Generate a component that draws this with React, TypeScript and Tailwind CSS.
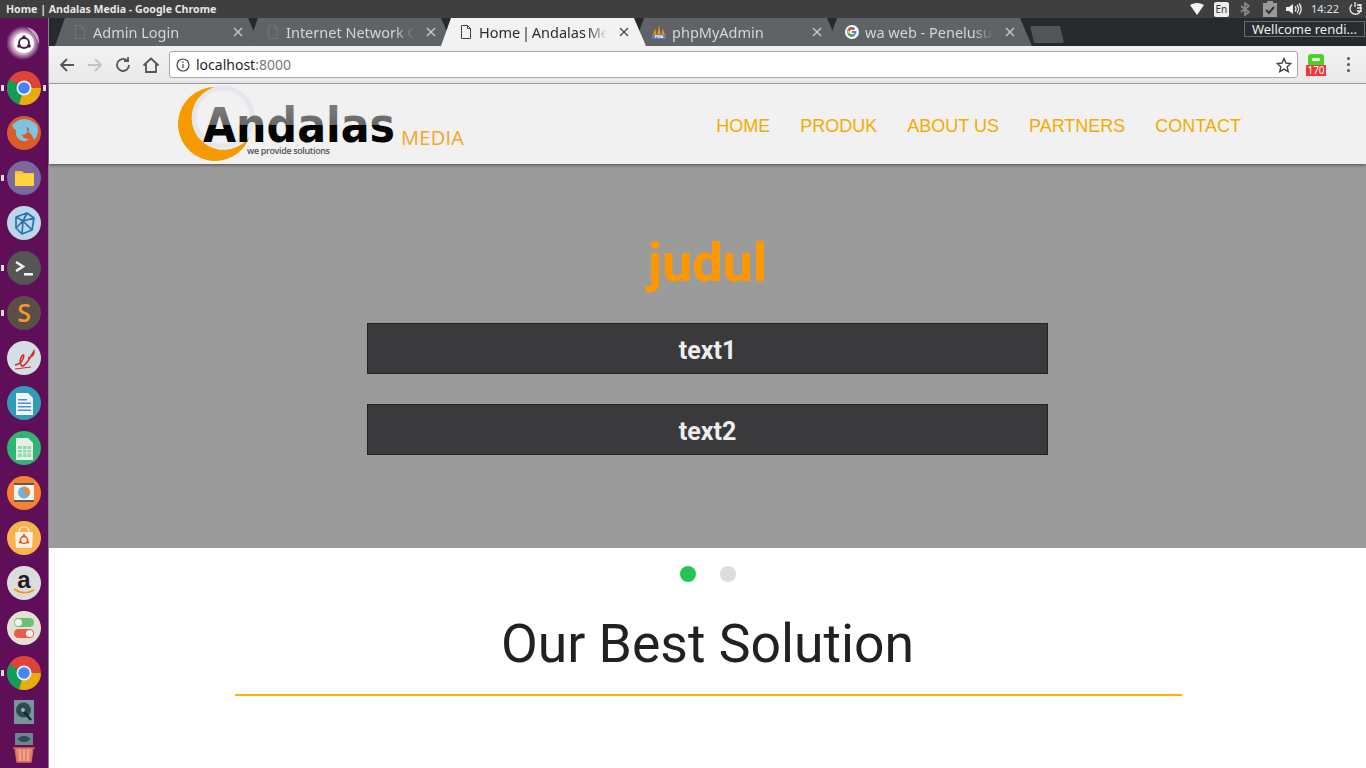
import { ReactNode } from "react";

const Chrome = ({ size = 34 }: { size?: number }) => (
  <svg width={size} height={size} viewBox="0 0 34 34">
    <circle cx="17" cy="17" r="17" fill="#db4437" />
    <path d="M17 17 L2.3 8.5 A17 17 0 0 0 12 33.2 Z" fill="#0f9d58" />
    <path d="M17 17 L34 17 A17 17 0 0 1 12 33.2 Z" fill="#e7ad0c" />
    <circle cx="17" cy="17" r="7.5" fill="#f1f1f1" />
    <circle cx="17" cy="17" r="5.8" fill="#4285f4" />
  </svg>
);

const Badge = ({ bg, children }: { bg: string; children: ReactNode }) => (
  <svg width="34" height="34" viewBox="0 0 34 34">
    <circle cx="17" cy="17" r="17" fill={bg} />
    {children}
  </svg>
);

const Doc = ({ fill = "#f2f5f7" }: { fill?: string }) => (
  <path d="M9 7h12l5 5v17H9z" fill={fill} />
);

const dockItems: { icon: ReactNode; pip?: boolean; both?: boolean; h?: string }[] = [
  {
    icon: (
      <svg width="34" height="34" viewBox="0 0 34 34">
        <defs>
          <radialGradient id="swirl">
            <stop offset="0.55" stopColor="#e8d4e6" />
            <stop offset="1" stopColor="#5e0f57" />
          </radialGradient>
        </defs>
        <circle cx="16" cy="17" r="17" fill="url(#swirl)" />
        <path d="M20 1 Q33 5 32 18 Q29 9 20 1z" fill="#c9a8c6" />
        <circle cx="17" cy="17" r="10" fill="#fff" />
        <circle cx="17" cy="17" r="5" fill="none" stroke="#4a1a4a" strokeWidth="1.8" />
        <circle cx="17" cy="11.2" r="1.8" fill="#4a1a4a" />
        <circle cx="12" cy="20" r="1.8" fill="#4a1a4a" />
        <circle cx="22" cy="20" r="1.8" fill="#4a1a4a" />
      </svg>
    ),
    h: "h-[44px]",
  },
  { icon: <Chrome />, pip: true, both: true },
  {
    icon: (
      <Badge bg="#dc5a2a">
        <path d="M5 9 Q17 -3 30 9 Q33 17 27 24 Q24 16 21 16 Q24 12 19 11 Q23 18 15 19 Q16 23 22 23 Q18 27 13 24 Q8 21 9 14 Q6 13 5 9z" fill="#7cc5df" />
      </Badge>
    ),
  },
  {
    icon: (
      <Badge bg="#7a689f">
        <path d="M8 10h7l2 2h10v13H8z" fill="#fbc02d" />
        <path d="M8 13h19v12H8z" fill="#fdd33f" />
      </Badge>
    ),
    pip: true,
  },
  {
    icon: (
      <Badge bg="#bcd6ea">
        <path d="M9 11 L20 7 L27 12 L25 24 L15 28 L9 22 Z M9 11 L16 15 L27 12 M16 15 L15 28 M20 7 L16 15 M9 22 L16 15 L25 24" fill="none" stroke="#2a72ad" strokeWidth="1.7" strokeLinejoin="round" />
      </Badge>
    ),
  },
  {
    icon: (
      <Badge bg="#555555">
        <path d="M9 11 L16 15.500 L9 20" fill="none" stroke="#f2f2f2" strokeWidth="2.6" />
        <path d="M17 22h9v2.600h-9z" fill="#f2f2f2" />
      </Badge>
    ),
    pip: true,
  },
  {
    icon: (
      <Badge bg="#5a4e48">
        <text x="17" y="25.500" textAnchor="middle" fontSize="25" fontWeight="600" fill="#f7982a" className="font-['Open_Sans',sans-serif]">S</text>
      </Badge>
    ),
    pip: true,
  },
  {
    icon: (
      <Badge bg="#d4dfe5">
        <path d="M8 24 Q14 23 16 18 Q18 12 15 15 Q12 19 14 24 Q16 27 21 20 L27 10 Q28 15 21 17" fill="none" stroke="#d9272c" strokeWidth="1.5" />
        <path d="M8 28 L24 26" stroke="#d9272c" strokeWidth="1" />
      </Badge>
    ),
  },
  {
    icon: (
      <Badge bg="#2f9db5">
        <Doc />
        <path d="M11 13h9v1.400h-9zM11 16.500h13v1.400H11zM11 20h13v1.400H11zM11 23.500h13v1.400H11z" fill="#4c8fe0" />
      </Badge>
    ),
  },
  {
    icon: (
      <Badge bg="#2fb573">
        <Doc fill="#e8efe9" />
        <path d="M11 15h13v11H11z" fill="#8fdcae" />
        <path d="M11 18.500h13M11 22h13M15.500 15v11M20 15v11" stroke="#e8efe9" strokeWidth="1" />
      </Badge>
    ),
  },
  {
    icon: (
      <Badge bg="#f58233">
        <path d="M7 8h20v17H7z" fill="#f4f2ec" />
        <path d="M7 7h20v2H7zM7 24h20v2H7z" fill="#5a5a5a" />
        <circle cx="17" cy="16.500" r="6" fill="#6fb3cf" />
        <path d="M17 16.500V10.500A6 6 0 0 1 22 19.500z" fill="#f08a3a" />
      </Badge>
    ),
  },
  {
    icon: (
      <Badge bg="#f9b34c">
        <path d="M8 11h18l-1 16H9z" fill="#f7f0e6" />
        <path d="M12 11 Q12 6 17 6 Q22 6 22 11" fill="none" stroke="#f7f0e6" strokeWidth="1.2" />
        <circle cx="17" cy="19" r="3.600" fill="none" stroke="#e95420" strokeWidth="1.5" />
        <circle cx="17" cy="14.600" r="1.300" fill="#e95420" />
        <circle cx="13.200" cy="21.200" r="1.300" fill="#e95420" />
        <circle cx="20.800" cy="21.200" r="1.300" fill="#e95420" />
      </Badge>
    ),
  },
  {
    icon: (
      <Badge bg="#dcdcdc">
        <text x="17" y="22" textAnchor="middle" fontSize="24" fontWeight="700" fill="#1d1d1b" className="font-['Liberation_Sans',sans-serif]">a</text>
        <path d="M7 23 Q17 30 27 24" fill="none" stroke="#f09a1a" strokeWidth="1.6" />
      </Badge>
    ),
  },
  {
    icon: (
      <Badge bg="#e3e1d5">
        <rect x="7" y="7" width="20" height="9" rx="4.500" fill="#6cc070" />
        <circle cx="11.500" cy="11.500" r="3.600" fill="#f4f4ee" />
        <rect x="7" y="18" width="20" height="9" rx="4.500" fill="#e85c50" />
        <circle cx="22.500" cy="22.500" r="3.600" fill="#f4f4ee" />
      </Badge>
    ),
  },
  { icon: <Chrome />, pip: true },
  {
    icon: (
      <svg width="34" height="34" viewBox="0 0 34 34">
        <rect x="7" y="3" width="20" height="24" rx="1" fill="#7b949c" />
        <path d="M9 13a7.500 7.500 0 0 1 15 0 7.500 7.500 0 0 1-15 0z" fill="#2e4a54" />
        <circle cx="16" cy="13" r="2" fill="#9fb3ba" />
        <path d="M17 15 L24 23" stroke="#16262c" strokeWidth="2.500" />
      </svg>
    ),
    h: "h-[37px]",
  },
  {
    icon: (
      <svg width="34" height="34" viewBox="0 0 34 34">
        <rect x="8" y="1" width="18" height="12" fill="#6d858d" />
        <ellipse cx="17" cy="7" rx="6" ry="3" fill="#2e4a54" />
        <path d="M6 16h22M8 16l2 14h14l2-14" fill="#e8836e" stroke="#d96a55" strokeWidth="1.4" />
        <path d="M13 17v12M17 17v12M21 17v12" stroke="#f4b9ab" strokeWidth="1.2" />
      </svg>
    ),
    h: "h-[34px]",
  },
];

const PageIcon = ({ tone = "#6f7377" }: { tone?: string }) => (
  <svg width="12" height="14" viewBox="0 0 12 14" fill="none" stroke={tone} strokeWidth="1">
    <path d="M1.500.5h6l3 3v10h-9z" />
    <path d="M7.500.5v3h3" />
  </svg>
);

const PmaIcon = () => (
  <svg width="16" height="18" viewBox="0 0 16 18">
    <path d="M1 12 L4 5 L5 12zM6 12 L8 1 L10 12zM11 12 L12 5 L15 12z" fill="#f29400" />
    <rect x="0" y="12" width="16" height="5" fill="#6c78af" />
    <text x="8" y="16.300" textAnchor="middle" fontSize="4.500" fontWeight="700" fill="#fff" className="font-['Liberation_Sans',sans-serif]">PMA</text>
  </svg>
);

const GoogleIcon = () => (
  <svg width="16" height="16" viewBox="0 0 16 16">
    <circle cx="8" cy="8" r="8" fill="#fff" />
    <path d="M12.900 6.800H8v2.400h2.800a3 3 0 1 1-.8-3.400l1.700-1.700A5.400 5.400 0 1 0 13 8c0-.4 0-.8-.1-1.200z" fill="#4285f4" />
    <path d="M3.200 5.500A5.400 5.400 0 0 1 11.700 4.100L10 5.800A3 3 0 0 0 5.300 6.900z" fill="#ea4335" />
    <path d="M3.200 10.500l2.100-1.400A3 3 0 0 0 5.300 6.900L3.200 5.500a5.400 5.400 0 0 0 0 5z" fill="#fbbc05" />
    <path d="M3.200 10.500A5.400 5.400 0 0 0 11.600 12l-1.900-1.500a3 3 0 0 1-4.400-1.400z" fill="#34a853" />
  </svg>
);

const tabShape = "[clip-path:polygon(10px_0,calc(100%-12px)_0,100%_100%,0_100%)]";

const tabs: { title: string; icon: ReactNode; active?: boolean; gap: string }[] = [
  { title: "Admin Login", icon: <PageIcon />, gap: "gap-[6px]" },
  { title: "Internet Network Connection", icon: <PageIcon />, gap: "gap-[6px]" },
  { title: "Home | Andalas Media", icon: <PageIcon tone="#444" />, active: true, gap: "gap-[6px]" },
  { title: "phpMyAdmin", icon: <PmaIcon />, gap: "gap-[6px]" },
  { title: "wa web - Penelusuran", icon: <GoogleIcon />, gap: "gap-[6px]" },
];

const Tab = ({ title, icon, active, gap }: { title: string; icon: ReactNode; active?: boolean; gap: string }) => (
  <div
    className={`${tabShape} ${gap} ml-[-12px] first:ml-0 flex h-[28px] w-[205px] shrink-0 items-center pl-[18px] pr-[17px] text-[14.5px] ${
      active ? "z-10 bg-[#f2f2f2] text-[#2b2b2b] [word-spacing:-2px]" : "bg-[#5f6367] text-[#d4d6d8]"
    }`}
  >
    <span className="flex w-[14px] shrink-0 justify-center">{icon}</span>
    <span className="min-w-0 flex-1 overflow-hidden whitespace-nowrap pt-[1px] [mask-image:linear-gradient(to_right,black_85%,transparent)]">{title}</span>
    <span className={`ml-[6px] shrink-0 ${active ? "text-[#555]" : "text-[#c4c6c8]"}`}>
      <svg width="10" height="10" viewBox="0 0 10 10" stroke="currentColor" strokeWidth="1.5">
        <path d="M1 1l8 8M9 1l-8 8" />
      </svg>
    </span>
  </div>
);

const TopTray = () => (
  <div className="flex items-center text-[#dfdfdf]">
    <svg width="14" height="12" viewBox="0 0 14 12" className="mr-[10px]"><path d="M0 2Q7-2 14 2L7 12z" fill="#f4f4f4" /></svg>
    <span className="mr-[11px] flex h-[15px] w-[15px] items-center justify-center rounded-[2px] bg-[#eeeeee] text-[10px] text-[#333]">En</span>
    <svg width="10" height="14" viewBox="0 0 10 14" fill="none" stroke="#8b8b8b" strokeWidth="1.6" className="mr-[13px]"><path d="M1 4l8 6-4 3V1l4 3-8 6" /></svg>
    <svg width="14" height="16" viewBox="0 0 14 16" className="mr-[9px]"><path d="M0 2h4V0h6v2h4v14H0z" fill="#9a9a9a" /><path d="M3 9l3 3 5-6" fill="none" stroke="#333" strokeWidth="2" /></svg>
    <svg width="16" height="12" viewBox="0 0 16 12" className="mr-[9px]"><path d="M0 4h3l4-3v10L3 8H0z" fill="#eee" /><path d="M9 3.500a3.500 3.500 0 0 1 0 5M11 2a6 6 0 0 1 0 8M13 .5a8 8 0 0 1 0 11" fill="none" stroke="#eee" strokeWidth="1.3" /></svg>
    <span className="mr-[9px] text-[11px] text-[#dbe3ea]">14:22</span>
    <svg width="14" height="14" viewBox="0 0 14 14" fill="none" stroke="#eee" strokeWidth="1.3" className="mr-[4px]"><path d="M4 2.500a5.500 5.500 0 1 0 7 0" /><path d="M7 0v5M9 3h5M9 6h5M9 9h5" /></svg>
  </div>
);

const ToolbarIcon = ({ d, color = "#555" }: { d: string; color?: string }) => (
  <svg width="18" height="18" viewBox="0 0 18 18" fill="none" stroke={color} strokeWidth="1.8">
    <path d={d} />
  </svg>
);

const Logo = () => (
  <svg width="290" height="80" viewBox="0 0 290 80">
    <defs>
      <linearGradient id="logoText" gradientUnits="userSpaceOnUse" x1="0" y1="18" x2="0" y2="60">
        <stop offset="0" stopColor="#808080" />
        <stop offset="0.54" stopColor="#666666" />
        <stop offset="0.55" stopColor="#050505" />
        <stop offset="1" stopColor="#000" />
      </linearGradient>
    </defs>
    <circle cx="47" cy="33" r="29" fill="#f1f1f1" stroke="#e4e8ec" strokeWidth="5" />
    <path d="M39 3 A37 37 0 1 0 74 52 A32 32 0 1 1 39 3 Z" fill="#f59b00" />
    <text x="27" y="58" fontSize="48" fontWeight="700" textLength="192" lengthAdjust="spacingAndGlyphs" fill="url(#logoText)" className="font-['DejaVu_Sans',sans-serif]">Andalas</text>
    <text x="71" y="70" fontSize="9" fontWeight="600" textLength="83" fill="#555" className="font-['Open_Sans',sans-serif]">we provide solutions</text>
    <text x="225" y="61" fontSize="20" textLength="63" fill="#f5a623" className="font-['Open_Sans',sans-serif]">MEDIA</text>
  </svg>
);

const navLinks = ["HOME", "PRODUK", "ABOUT US", "PARTNERS", "CONTACT"];

export default function App() {
  return (
    <div className="relative flex h-[768px] w-[1366px] flex-col overflow-hidden bg-white font-['Noto_Sans',sans-serif]">
      <div className="flex h-[18px] shrink-0 items-center justify-between bg-[#3f3f3f] pl-[6px]">
        <span className="pt-[1px] text-[10.6px] font-bold text-[#e6e6e6]">Home | Andalas Media - Google Chrome</span>
        <TopTray />
      </div>

      <div className="flex min-h-0 flex-1">
        <div className="flex w-[49px] shrink-0 flex-col items-center border-r border-[#8d7a8b] bg-[#5e0f57] pt-[3px]">
          {dockItems.map((item, i) => (
            <div key={i} className={`relative flex ${item.h ?? "h-[45px]"} w-full shrink-0 items-center justify-center`}>
              {item.icon}
              {item.pip && <span className="absolute left-[1px] top-[20px] h-[6px] w-[3px] bg-[#dcdcdc]" />}
              {item.both && <span className="absolute right-[2px] top-[20px] h-[6px] w-[3px] bg-[#dcdcdc]" />}
            </div>
          ))}
        </div>

        <div className="flex min-w-0 flex-1 flex-col">
          <div className="relative flex h-[28px] shrink-0 bg-[#272a2d] pl-[6px]">
            {tabs.map((t) => (
              <Tab key={t.title} {...t} />
            ))}
            <div className="ml-[-2px] mt-[8px] h-[17px] w-[34px] rounded-[2px] bg-[#50555a] [clip-path:polygon(0_0,88%_0,100%_100%,12%_100%)]" />
            <div className="absolute right-[1px] top-[3px] whitespace-nowrap border border-[#6a6d70] bg-[#2a2d30] px-[7px] text-[13px] leading-[14px] text-[#ececec]">
              Wellcome rendi...
            </div>
          </div>

          <div className="flex h-[38px] shrink-0 items-center border-b border-[#a8a8a8] bg-gradient-to-b from-[#f2f2f2] to-[#e9e9e9] pl-[9px] pr-[16px]">
            <ToolbarIcon d="M16 9H3M9 3L3 9l6 6" />
            <span className="ml-[10px]"><ToolbarIcon d="M2 9h13M9 3l6 6-6 6" color="#c4c4c4" /></span>
            <span className="ml-[10px]"><ToolbarIcon d="M15 9a6 6 0 1 1-2-4.500M14 1v4h-4" /></span>
            <span className="ml-[10px]"><ToolbarIcon d="M1.500 9.500L9 2.500l7.500 7M4 8v8h10V8" /></span>
            <div className="ml-[9px] flex h-[27px] flex-1 items-center rounded-[3px] border border-[#a9a9a9] bg-white pl-[6px] pr-[5px] text-[14px]">
              <svg width="14" height="14" viewBox="0 0 14 14" fill="none" stroke="#444" strokeWidth="1.2">
                <circle cx="7" cy="7" r="6" />
                <path d="M7 6v4.200M7 3.500v1.400" />
              </svg>
              <span className="ml-[6px] text-[#1f1f1f]">localhost</span>
              <span className="text-[#777]">:8000</span>
              <svg width="16" height="16" viewBox="0 0 16 16" fill="none" stroke="#444" strokeWidth="1.4" className="ml-auto">
                <path d="M8 1.500l2 4.500 4.800.5-3.600 3.200 1 4.800L8 12.100l-4.200 2.400 1-4.800L1.200 6.500 6 6z" />
              </svg>
            </div>
            <div className="relative ml-[8px] h-[22px] w-[20px]">
              <div className="mx-auto flex h-[13px] w-[16px] items-start justify-center rounded-[3px] bg-[#4fd024] pt-[4px]">
                <span className="h-[3px] w-[8px] rounded-[1px] bg-[#e8fbe0]" />
              </div>
              <div className="absolute bottom-0 left-0 flex h-[11px] w-[20px] items-center justify-center bg-[#f0353b] text-[10px] leading-none text-white">170</div>
            </div>
            <div className="ml-[21px] flex flex-col gap-[3px]">
              <span className="h-[3px] w-[3px] rounded-full bg-[#555]" />
              <span className="h-[3px] w-[3px] rounded-full bg-[#555]" />
              <span className="h-[3px] w-[3px] rounded-full bg-[#555]" />
            </div>
          </div>

          <div className="min-h-0 flex-1 bg-white font-['Roboto',sans-serif]">
            <nav className="relative z-10 flex h-[80px] items-center justify-between bg-[#f1f1f1] pl-[127px] pr-[125px] shadow-[0_1px_3px_rgba(0,0,0,0.5)]">
              <Logo />
              <ul className="mt-[5px] flex gap-[30px] font-['Liberation_Sans',sans-serif] text-[18px] text-[#f5ab00]">
                {navLinks.map((l) => (
                  <li key={l}>{l}</li>
                ))}
              </ul>
            </nav>

            <section className="flex h-[384px] flex-col items-center bg-[#9b9b9b] pt-[67px]">
              <h1 className="text-[54px] font-bold leading-[64px] text-[#ff9800]">judul</h1>
              <div className="mt-[28px] flex h-[51px] w-[681px] items-center justify-center border border-[#222] bg-[#3a3a3c] pt-[5px] text-[25px] font-bold text-[#eeeeee]">text1</div>
              <div className="mt-[30px] flex h-[51px] w-[681px] items-center justify-center border border-[#222] bg-[#3a3a3c] pt-[5px] text-[25px] font-bold text-[#eeeeee]">text2</div>
            </section>

            <div className="flex justify-center gap-[24px] pt-[18px]">
              <span className="h-[16px] w-[16px] rounded-full bg-[#26c456]" />
              <span className="h-[16px] w-[16px] rounded-full bg-[#dddddd]" />
            </div>

            <div className="ml-[186px] mt-[30px] w-[947px] border-b-2 border-[#ffb300] pb-[18px] pr-[2px] text-center text-[53.5px] leading-[64px] text-[#212121]">
              Our Best Solution
            </div>
          </div>
        </div>
      </div>
    </div>
  );
}
